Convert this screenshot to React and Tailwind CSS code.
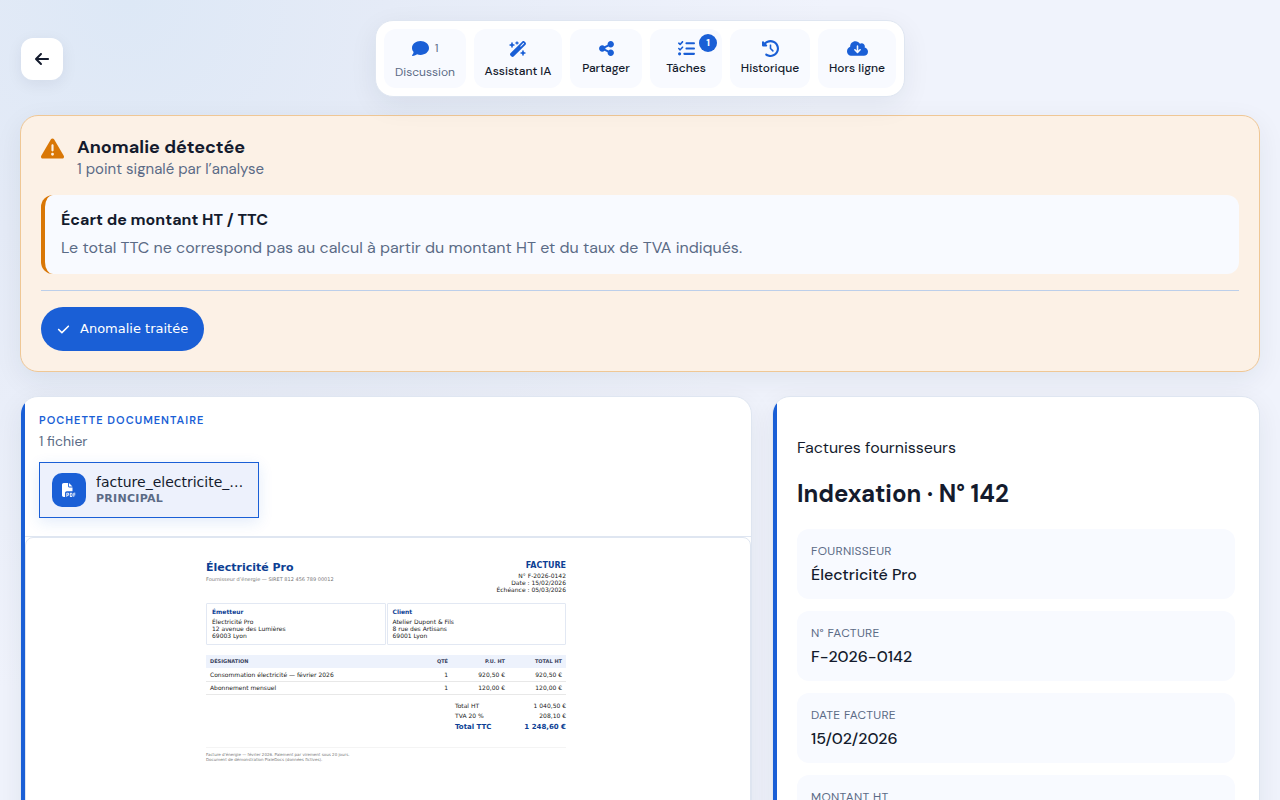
import React from 'react';
import {
  FaArrowLeft,
  FaCheck,
  FaClockRotateLeft,
  FaCloudArrowDown,
  FaComment,
  FaFilePdf,
  FaListCheck,
  FaShareNodes,
  FaTriangleExclamation,
  FaWandMagicSparkles,
} from 'react-icons/fa6';

const fields = [
  { id: 'fournisseur', label: 'Fournisseur', value: 'Électricité Pro' },
  { id: 'numero', label: 'N° facture', value: 'F-2026-0142' },
  { id: 'date', label: 'Date facture', value: '15/02/2026' },
  { id: 'montant', label: 'Montant HT', value: '1 040,50 €' },
];

const parties = [
  { title: 'Émetteur', lines: ['Électricité Pro', '12 avenue des Lumières', '69003 Lyon'] },
  { title: 'Client', lines: ['Atelier Dupont & Fils', '8 rue des Artisans', '69001 Lyon'] },
];

const rows = [
  { name: 'Consommation électricité — février 2026', qty: 1, price: '920,50 €', total: '920,50 €' },
  { name: 'Abonnement mensuel', qty: 1, price: '120,00 €', total: '120,00 €' },
];

const NavButton = ({ label, children, iconClass = 'h-[18px]', className = 'min-w-[72px]', color = 'text-[#141b2d] font-medium' }) => (
  <button className={`relative flex flex-col items-center gap-0.5 rounded-xl bg-[#f8faff] pt-2.5 pb-[7px] text-xs ${className} ${color}`}>
    <span className={`flex items-center gap-1.5 text-[#1a5fd6] ${iconClass}`}>{children}</span>
    <span className="leading-[18px] whitespace-nowrap">{label}</span>
  </button>
);

const Header = () => (
  <header className="grid grid-cols-[1fr_auto_1fr] items-center">
    <button
      aria-label="Retour"
      className="flex h-[42px] w-[42px] items-center justify-center rounded-xl bg-white text-[#141b2d] ml-px shadow-[0_4px_16px_rgba(15,35,60,0.07)]"
    >
      <FaArrowLeft size={16} />
    </button>
    <nav className="flex gap-2 rounded-[18px] border border-[#dfe6f1] bg-white p-2 px-2 shadow-[0_8px_28px_rgba(15,40,60,0.07)]">
      <NavButton label="Discussion" iconClass="h-[18px] mb-1" className="w-[82px]" color="text-[#5b6b86]">
        <FaComment size={17} />
        <span className="text-xs text-[#5b6b86]">1</span>
      </NavButton>
      <NavButton label="Assistant IA" iconClass="h-[19px] mb-0.5" className="w-[88px]">
        <FaWandMagicSparkles size={18} />
      </NavButton>
      <NavButton label="Partager">
        <FaShareNodes size={17} />
      </NavButton>
      <NavButton label="Tâches">
        <FaListCheck size={17} />
        <span className="absolute top-[5px] right-[5px] flex h-[18px] w-[18px] items-center justify-center rounded-full bg-[#1a5fd6] text-[10px] font-bold text-white">
          1
        </span>
      </NavButton>
      <NavButton label="Historique" className="w-20">
        <FaClockRotateLeft size={17} />
      </NavButton>
      <NavButton label="Hors ligne" className="w-[78px]">
        <FaCloudArrowDown size={21} />
      </NavButton>
    </nav>
  </header>
);

const Anomaly = () => (
  <section className="mt-[18px] rounded-[18px] border border-[#efc795] bg-[#fcf1e6] p-5 shadow-[0_8px_28px_rgba(15,40,60,0.07)]">
    <div className="flex gap-[13px]">
      <FaTriangleExclamation size={23} className="mt-px text-[#d97706]" />
      <div>
        <h2 className="text-lg leading-[22px] font-bold">Anomalie détectée</h2>
        <p className="text-[15px] leading-[22px] text-[#5b6b86]">1 point signalé par l’analyse</p>
      </div>
    </div>
    <div className="mt-[15px] rounded-xl border-l-4 border-[#d97706] bg-[#f8faff] px-4 pt-3 pb-3.5">
      <h3 className="text-base leading-[26px] font-bold">Écart de montant HT / TTC</h3>
      <p className="mt-0.5 text-base leading-[25px] text-[#5b6b86]">
        Le total TTC ne correspond pas au calcul à partir du montant HT et du taux de TVA indiqués.
      </p>
    </div>
    <div className="mt-4 border-t border-[#bccfea] pt-4">
      <button className="flex h-11 items-center gap-2.5 rounded-full bg-[#1a5fd6] px-4 font-['DejaVu_Sans',sans-serif] text-[13px] text-white">
        <FaCheck size={13} />
        Anomalie traitée
      </button>
    </div>
  </section>
);

const Invoice = () => (
  <div className="mx-auto w-[360px] font-['DejaVu_Sans',sans-serif] text-[6px] leading-[7px] text-[#222]">
    <div className="flex justify-between">
      <div>
        <p className="text-[11px] leading-4 font-bold text-[#0d3f94]">Électricité Pro</p>
        <p className="text-[5px] text-[#777]">Fournisseur d’énergie — SIRET 812 456 789 00012</p>
      </div>
      <div className="text-right">
        <p className="text-[8px] leading-3 font-bold text-[#0d3f94]">FACTURE</p>
        <p>N° F-2026-0142</p>
        <p>Date : 15/02/2026</p>
        <p>Échéance : 05/03/2026</p>
      </div>
    </div>
    <div className="mt-2.5 grid grid-cols-2 gap-px">
      {parties.map((party) => (
        <div key={party.title} className="rounded-[1px] border border-[#e2e8f3] px-[5px] pt-1 pb-[5px]">
          <p className="mb-[3px] font-bold text-[#0d3f94]">{party.title}</p>
          {party.lines.map((line) => (
            <p key={line}>{line}</p>
          ))}
        </div>
      ))}
    </div>
    <table className="mt-2.5 w-full text-right">
      <thead className="bg-[#edf2fc] text-[5px] text-[#3c4560] uppercase">
        <tr className="h-[13px]">
          <th className="pl-1 text-left">Désignation</th>
          <th className="w-[50px]">Qté</th>
          <th className="w-[57px]">P.U. HT</th>
          <th className="w-[61px] pr-1">Total HT</th>
        </tr>
      </thead>
      <tbody>
        {rows.map((row) => (
          <tr key={row.name} className="h-[13px] border-b border-[#e8e8e8]">
            <td className="pl-1 text-left">{row.name}</td>
            <td>{row.qty}</td>
            <td>{row.price}</td>
            <td className="pr-1">{row.total}</td>
          </tr>
        ))}
      </tbody>
    </table>
    <dl className="mt-1.5 ml-auto grid w-[111px] grid-cols-[auto_1fr] leading-[10px]">
      <dt>Total HT</dt>
      <dd className="text-right">1 040,50 €</dd>
      <dt>TVA 20 %</dt>
      <dd className="text-right">208,10 €</dd>
      <dt className="text-[7px] leading-3 font-bold text-[#0d3f94]">Total TTC</dt>
      <dd className="text-right text-[7px] leading-3 font-bold text-[#0d3f94]">1 248,60 €</dd>
    </dl>
    <div className="mt-3.5 border-t border-[#f4f4f4] pt-1 text-[4px] leading-[5px] text-[#777]">
      <p>Facture d’énergie — février 2026. Paiement par virement sous 20 jours.</p>
      <p>Document de démonstration PixieDocs (données fictives).</p>
    </div>
  </div>
);

const Card = ({ children }) => (
  <section className="relative overflow-hidden rounded-[18px] border border-[#dfe6f1] bg-white shadow-[0_8px_28px_rgba(15,40,60,0.07)]">
    <span className="absolute inset-y-0 left-0 w-1 bg-[#1a5fd6]"></span>
    <div className="pl-1">{children}</div>
  </section>
);

const Documents = () => (
  <Card>
    <div className="border-b border-[#dfe6f1] px-3.5 pt-3 pb-[18px]">
      <h2 className="text-[11px] leading-[22px] font-semibold tracking-[1px] text-[#1a5fd6] uppercase">Pochette documentaire</h2>
      <p className="text-sm leading-5 text-[#5b6b86]">1 fichier</p>
      <button className="mt-[11px] flex h-14 w-[220px] items-center gap-2.5 border border-[#1a5fd6] bg-[#edf1fc] px-3 text-left font-['DejaVu_Sans',sans-serif] shadow-[0_4px_14px_rgba(26,95,216,0.12)]">
        <span className="flex h-[34px] w-[34px] shrink-0 items-center justify-center rounded-[10px] bg-[#1a5fd6] text-white">
          <FaFilePdf size={14} />
        </span>
        <span className="min-w-0">
          <span className="block truncate text-sm leading-[18px]">facture_electricite_fevrier_2026.pdf</span>
          <span className="block text-[11px] leading-4 font-bold tracking-wide text-[#5b6b86]">PRINCIPAL</span>
        </span>
      </button>
    </div>
    <div className="min-h-[320px] rounded-lg border border-[#dfe6f1] pt-[22px] pr-1 pb-10">
      <Invoice />
    </div>
  </Card>
);

const Indexation = () => (
  <Card>
    <div className="pt-[37px] pr-6 pb-6 pl-5">
      <p className="text-base leading-7">Factures fournisseurs</p>
      <h1 className="mt-3.5 text-2xl leading-9 font-bold">Indexation · N° 142</h1>
      <dl className="mt-[17px] grid gap-3">
        {fields.map((field) => (
          <div key={field.id} className="h-[70px] rounded-xl bg-[#f8faff] px-3.5 pt-3">
            <dt className="text-xs leading-5 tracking-wide text-[#5b6b86] uppercase">{field.label}</dt>
            <dd className="text-base leading-7 font-medium">{field.value}</dd>
          </div>
        ))}
      </dl>
    </div>
  </Card>
);

const App = () => (
  <div className="min-h-screen bg-[#f0f3fc] bg-[radial-gradient(circle_at_10%_0%,#dde8f6_0%,#e5ebf7_260px,transparent_700px)] px-5 pt-5 pb-5 font-['DM_Sans',Inter,sans-serif] text-[#141b2d]">
    <Header />
    <Anomaly />
    <main className="mt-6 grid grid-cols-[3fr_2fr] gap-5">
      <Documents />
      <Indexation />
    </main>
  </div>
);

export default App;
